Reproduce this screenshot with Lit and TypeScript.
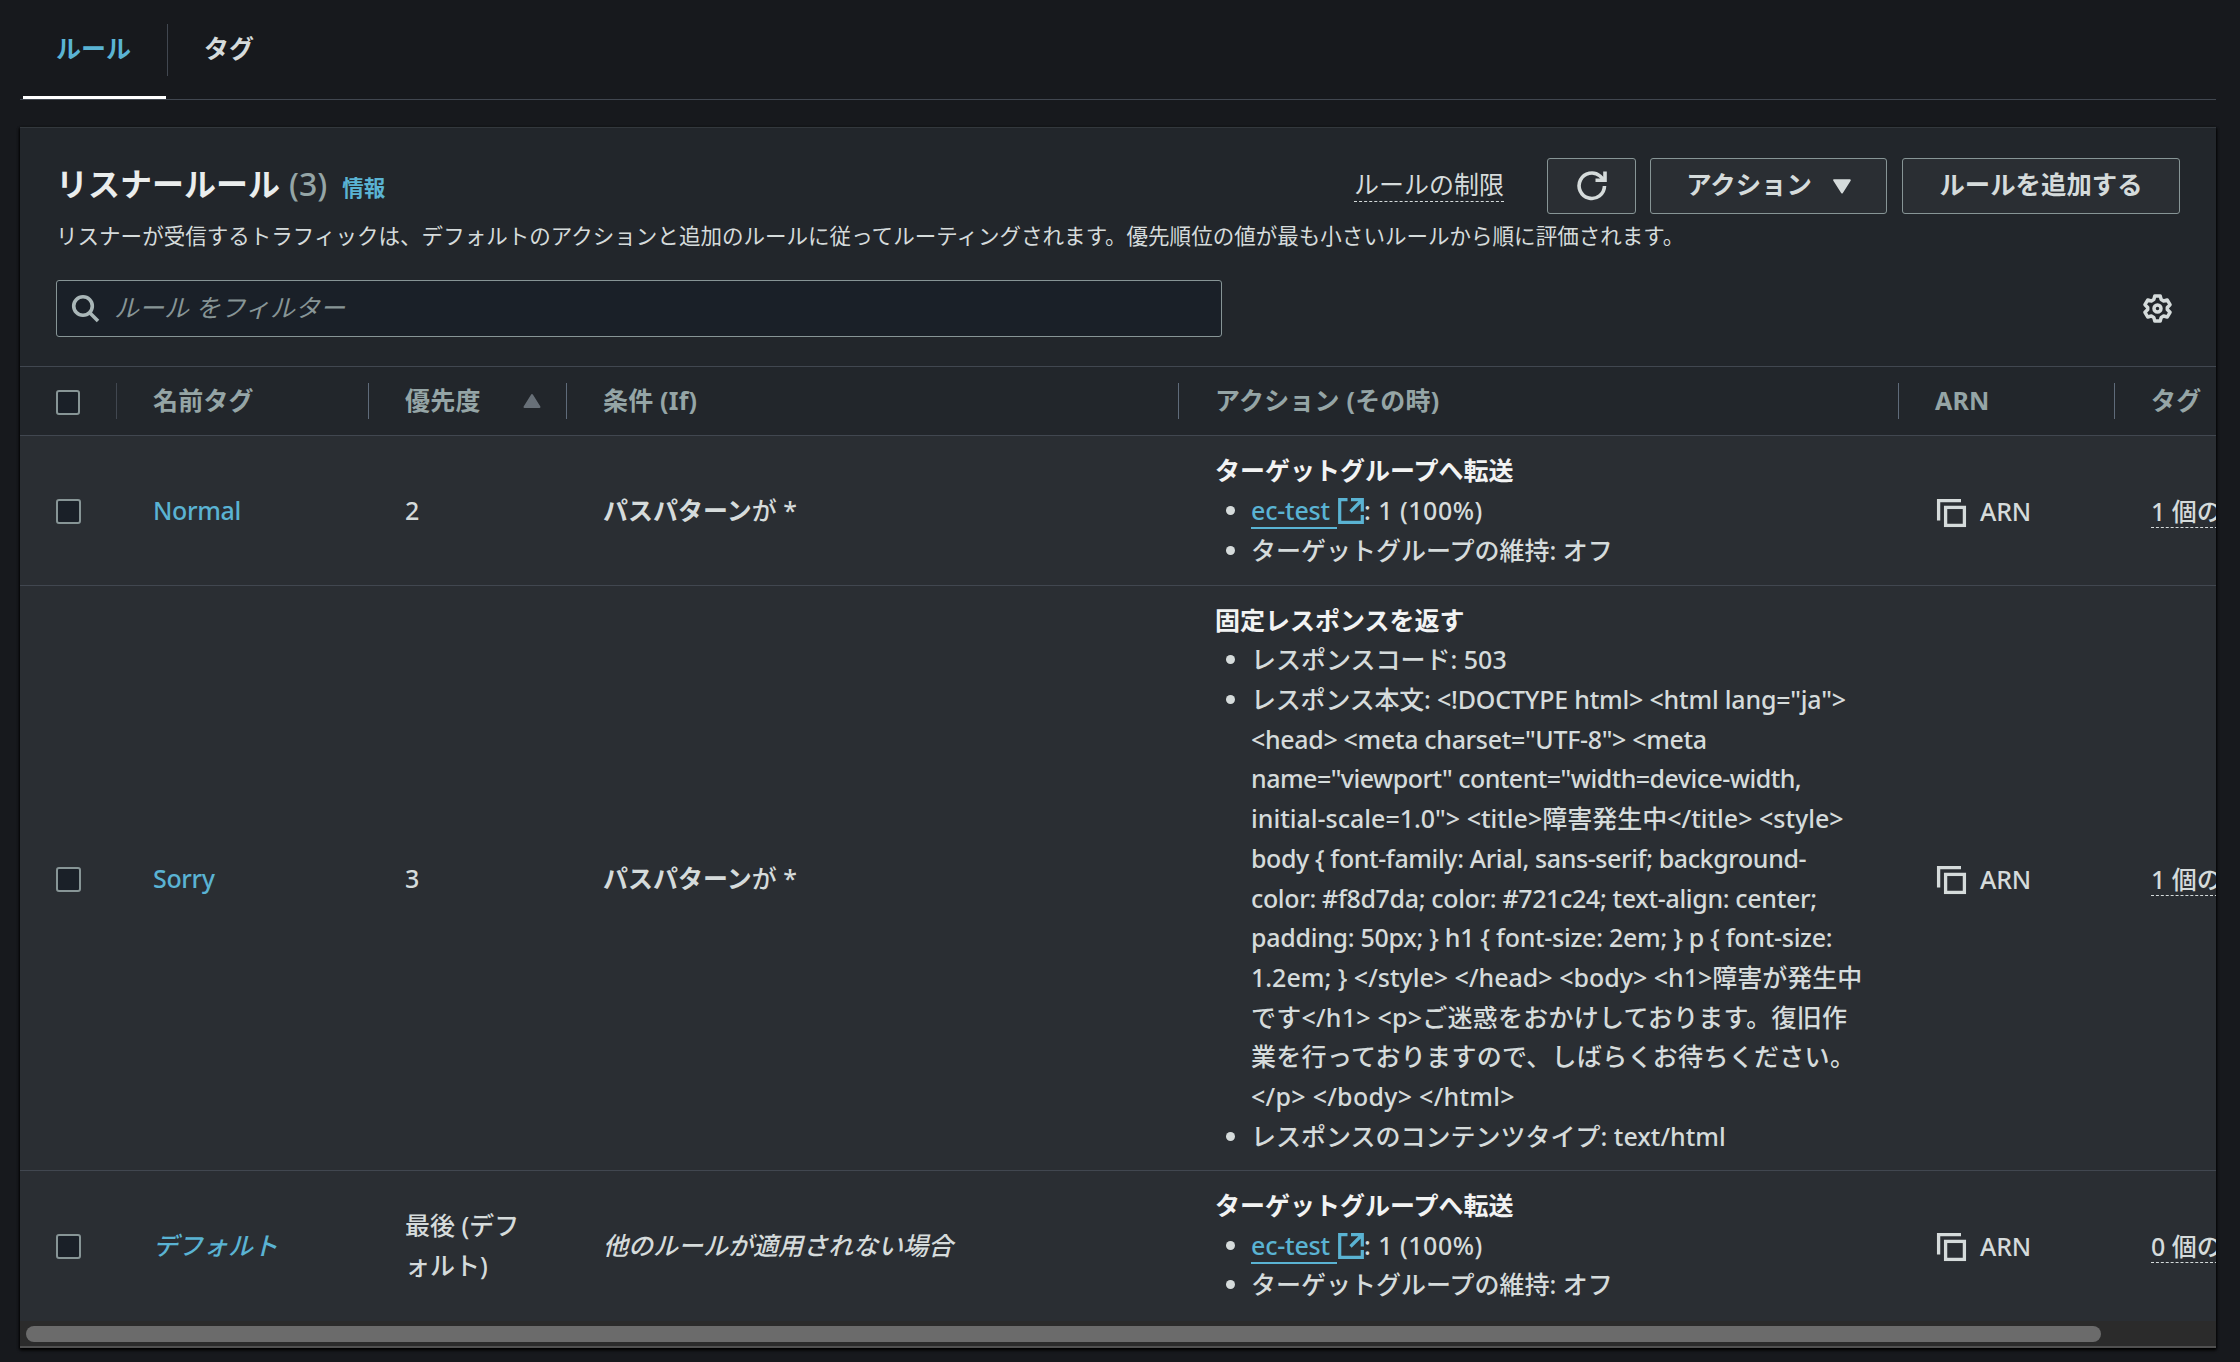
import { LitElement, html, css } from "lit";
import { customElement } from "lit/decorators.js";
import { styleMap } from "lit/directives/style-map.js";

const copyIcon = html`<svg viewBox="0 0 32 32" width="32" height="32" fill="none" stroke="currentColor" stroke-width="3.3"><path d="M3.600 24.500V4.600H26"/><rect x="10.600" y="11.400" width="18.800" height="18"/></svg>`;
const extIcon = html`<svg class="ext" viewBox="0 0 26 26" width="26" height="26" fill="none" stroke="currentColor" stroke-width="3.2"><path d="M9.500 1.700H1.700V24.300H24.300V17M13 1.700H24.300V13.500M23.500 2.500L12.500 13.500"/></svg>`;

const forward = html`
  <div class="act-title">ターゲットグループへ転送</div>
  <ul>
    <li><a class="tg"><span>ec-test</span>${extIcon}</a><span class="weight">: 1 (100%)</span></li>
    <li>ターゲットグループの維持: オフ</li>
  </ul>`;

/* Each line of the response body with its tracking in pixels. */
const responseBody: [string, number][] = [
  [`レスポンス本文: <!DOCTYPE html> <html lang="ja">`, -0.2],
  [`<head> <meta charset="UTF-8"> <meta`, -0.33],
  [`name="viewport" content="width=device-width,`, -0.53],
  [`initial-scale=1.0"> <title>障害発生中</title> <style>`, 0],
  [`body { font-family: Arial, sans-serif; background-`, -0.39],
  [`color: #f8d7da; color: #721c24; text-align: center;`, -0.34],
  [`padding: 50px; } h1 { font-size: 2em; } p { font-size:`, -0.28],
  [`1.2em; } </style> </head> <body> <h1>障害が発生中`, 0],
  [`です</h1> <p>ご迷惑をおかけしております。復旧作`, 0.23],
  [`業を行っておりますので、しばらくお待ちください。`, 0.3],
  [`</p> </body> </html>`, 0.28],
];

const fixed = html`
  <div class="act-title">固定レスポンスを返す</div>
  <ul>
    <li>レスポンスコード: 503</li>
    <li class="doc">${responseBody.map(([t, ls]) => html`<div style=${styleMap({ letterSpacing: `${ls}px` })}>${t}</div>`)}</li>
    <li>レスポンスのコンテンツタイプ: text/html</li>
  </ul>`;

const path = html`<b>パスパターン</b>が *`;
const rows = [
  { cls: "r1", name: html`Normal`, prio: "2", cond: path, action: forward, tags: "1 個のタグ" },
  { cls: "r2", name: html`Sorry`, prio: "3", cond: path, action: fixed, tags: "1 個のタグ" },
  { cls: "r3", name: html`<i>デフォルト</i>`, prio: "最後 (デフォルト)", cond: html`<i>他のルールが適用されない場合</i>`, action: forward, tags: "0 個のタグ" },
];

@customElement("app-root")
export class AppRoot extends LitElement {
  static styles = css`
    :host { display: block; box-sizing: border-box; width: 2240px; height: 1362px; overflow: hidden; background: #17191d; color: #d5dbdb; font: 500 25px/39.7px "Noto Sans", "Noto Sans CJK JP", sans-serif; padding: 0 24px 0 20px; }
    * { box-sizing: border-box; }
    .tabs { height: 100px; display: flex; border-bottom: 1px solid #414750; padding: 24px 0 0 3px; font-weight: 700; }
    .tab { height: 75px; padding: 5px 33px 0; }
    .tab.on { width: 143px; margin-right: 1px; color: #5ab3d3; border-bottom: 3px solid #fff; }
    .tab.next { height: 52px; border-left: 1px solid #414750; padding-left: 36px; }
    .panel { margin-top: 27px; height: 1221px; background: #22262b; border-top: 1px solid #33383d; border-bottom: 2px solid #505050; box-shadow: 0 2px 3px #000, 1px 1px 2px #0008, -1px 1px 2px #0008; display: flex; flex-direction: column; overflow: hidden; }
    .head { flex: none; display: flex; justify-content: space-between; height: 88px; padding: 30px 36px 0; }
    .title { display: flex; align-items: baseline; font-size: 32px; line-height: 52px; color: #eaeded; font-weight: 700; }
    .count { color: #95a5a6; font-weight: 500; margin-left: 9px; }
    .info { color: #5ab3d3; font-size: 21.5px; margin-left: 15px; }
    .tools { display: flex; gap: 14px; align-items: flex-start; }
    .limit { border-bottom: 1px dashed #d5dbdb; line-height: 34px; margin: 9px 29px 0 0; font-weight: 400; }
    .btn { height: 56px; border: 1.5px solid #879596; border-radius: 3px; background: #2a2e33; color: #d5dbdb; font-size: 25.4px; font-weight: 700; display: flex; align-items: center; justify-content: center; padding-bottom: 2px; }
    .refresh { width: 89px; padding-bottom: 0; }
    .actions { width: 237px; gap: 21px; }
    .actions svg { margin-top: 3px; }
    .add { width: 278px; margin-left: 1px; }
    .desc { flex: none; padding: 0 36px; font-size: 21.54px; font-weight: 400; line-height: 39px; height: 64px; white-space: nowrap; }
    .filter { flex: none; padding: 0 44px 0 36px; display: flex; justify-content: space-between; align-items: center; height: 57px; margin-bottom: 29px; }
    .search { width: 1166px; height: 57px; border: 1.5px solid #879596; border-radius: 3px; background: #1a2028; display: flex; align-items: center; padding: 0 0 1px 14px; gap: 14px; color: #879596; font-style: italic; font-weight: 400; }
    .row { display: grid; flex: none; grid-template-columns: 97px 252px 198px 612px 720px 216px 200px; width: 2295px; border-top: 1px solid #414750; align-items: center; background: #2a2e33; }
    .cell { padding: 1px 36px 0; }
    .row.h { height: 69px; background: #22262b; font-weight: 700; color: #95a5a6; line-height: 36px; letter-spacing: 0.2px; }
    .row.h .cell { height: 36px; border-right: 1px solid #5f6b7a; display: flex; align-items: center; justify-content: space-between; padding-top: 0; padding-bottom: 2px; }
    .row.h .cell:first-child { border-color: #414750; padding-top: 1px; padding-bottom: 0; }
    .sort { margin: 2px -11px 0 0; }
    .cb { width: 25px; height: 25px; border: 2px solid #879596; border-radius: 3px; background: #1a2028; margin-top: 1px; }
    .r1 { height: 150px; }
    .r2 { height: 585px; }
    .r3 { height: 151px; padding-bottom: 2px; }
    .name { color: #5ab3d3; letter-spacing: -0.35px; }
    .name i { letter-spacing: 0; }
    b { font-weight: 700; }
    .act-title { font-weight: 700; color: #f2f3f3; }
    .cell.act { padding: 1px 20px 0 36px; }
    ul { margin: 0; padding-left: 36px; }
    .doc { white-space: pre; }
    .tg { color: #5ab3d3; letter-spacing: -0.2px; }
    .tg span { border-bottom: 2px solid #5ab3d3; padding-right: 7px; }
    .weight { letter-spacing: 0.5px; }
    .ext { vertical-align: -4px; margin-left: 1px; }
    .cell.arn { display: flex; align-items: center; gap: 13px; padding-top: 3px; letter-spacing: -0.2px; }
    .cell.tags { padding-top: 0; }
    .tags span { border-bottom: 1px dashed #d5dbdb; line-height: 32px; display: inline-block; vertical-align: middle; white-space: nowrap; margin-top: -2px; }
    .bar { flex: 1; background: #2b2b2b; padding: 5px 0 0 6px; }
    .thumb { width: 2075px; height: 16px; border-radius: 8px; background: #6b6b6b; }
    svg { flex: none; }
  `;

  render() {
    return html`
      <div class="tabs"><div class="tab on">ルール</div><div class="tab next">タグ</div></div>
      <section class="panel">
        <div class="head">
          <div class="title">リスナールール<span class="count">(3)</span><span class="info">情報</span></div>
          <div class="tools">
            <span class="limit">ルールの制限</span>
            <div class="btn refresh"><svg width="30" height="30" viewBox="0 0 30 30" fill="none" stroke="currentColor" stroke-width="3.600"><path d="M27.500 15A12.700 12.700 0 1 1 23 5L27 9"/><path d="M28 0.500V9.300H18.500"/></svg></div>
            <div class="btn actions">アクション<svg width="18" height="15" viewBox="0 0 18 15"><path d="M1.200 1.200H16.800L9 13.500Z" fill="currentColor" stroke="currentColor" stroke-width="2" stroke-linejoin="round"/></svg></div>
            <div class="btn add">ルールを追加する</div>
          </div>
        </div>
        <div class="desc">リスナーが受信するトラフィックは、デフォルトのアクションと追加のルールに従ってルーティングされます。優先順位の値が最も小さいルールから順に評価されます。</div>
        <div class="filter">
          <div class="search"><svg width="29" height="29" viewBox="0 0 29 29" fill="none" stroke="#aab7b8" stroke-width="3.600"><circle cx="12" cy="12" r="9.300"/><path d="M18.500 18.500L27 27"/></svg>ルール をフィルター</div>
          <svg width="29" height="29" viewBox="0 0 29 29" fill="none" stroke="#d5dbdb" stroke-width="3.500"><path stroke-linejoin="round" d="M11.800 1.900H17.200L18.200 5.600L20.600 7L24.300 6L27 10.700L24.300 13.500V15.500L27 18.300L24.300 23L20.600 22L18.200 23.400L17.200 27.100H11.800L10.800 23.400L8.400 22L4.700 23L2 18.300L4.700 15.500V13.500L2 10.700L4.700 6L8.400 7L10.800 5.600Z"/><circle cx="14.500" cy="14.500" r="3.500"/></svg>
        </div>
        <div class="row h">
          <div class="cell"><div class="cb"></div></div>
          <div class="cell">名前タグ</div>
          <div class="cell">優先度<svg class="sort" width="18" height="16" viewBox="0 0 18 16"><path d="M9 2L16.500 14H1.500Z" fill="#687078" stroke="#687078" stroke-width="2" stroke-linejoin="round"/></svg></div>
          <div class="cell">条件 (If)</div>
          <div class="cell">アクション (その時)</div>
          <div class="cell">ARN</div>
          <div class="cell">タグ</div>
        </div>
        ${rows.map((r) => html`
          <div class="row ${r.cls}">
            <div class="cell"><div class="cb"></div></div>
            <div class="cell name">${r.name}</div>
            <div class="cell">${r.prio}</div>
            <div class="cell">${r.cond}</div>
            <div class="cell act">${r.action}</div>
            <div class="cell arn">${copyIcon}ARN</div>
            <div class="cell tags"><span>${r.tags}</span></div>
          </div>`)}
        <div class="bar"><div class="thumb"></div></div>
      </section>`;
  }
}
